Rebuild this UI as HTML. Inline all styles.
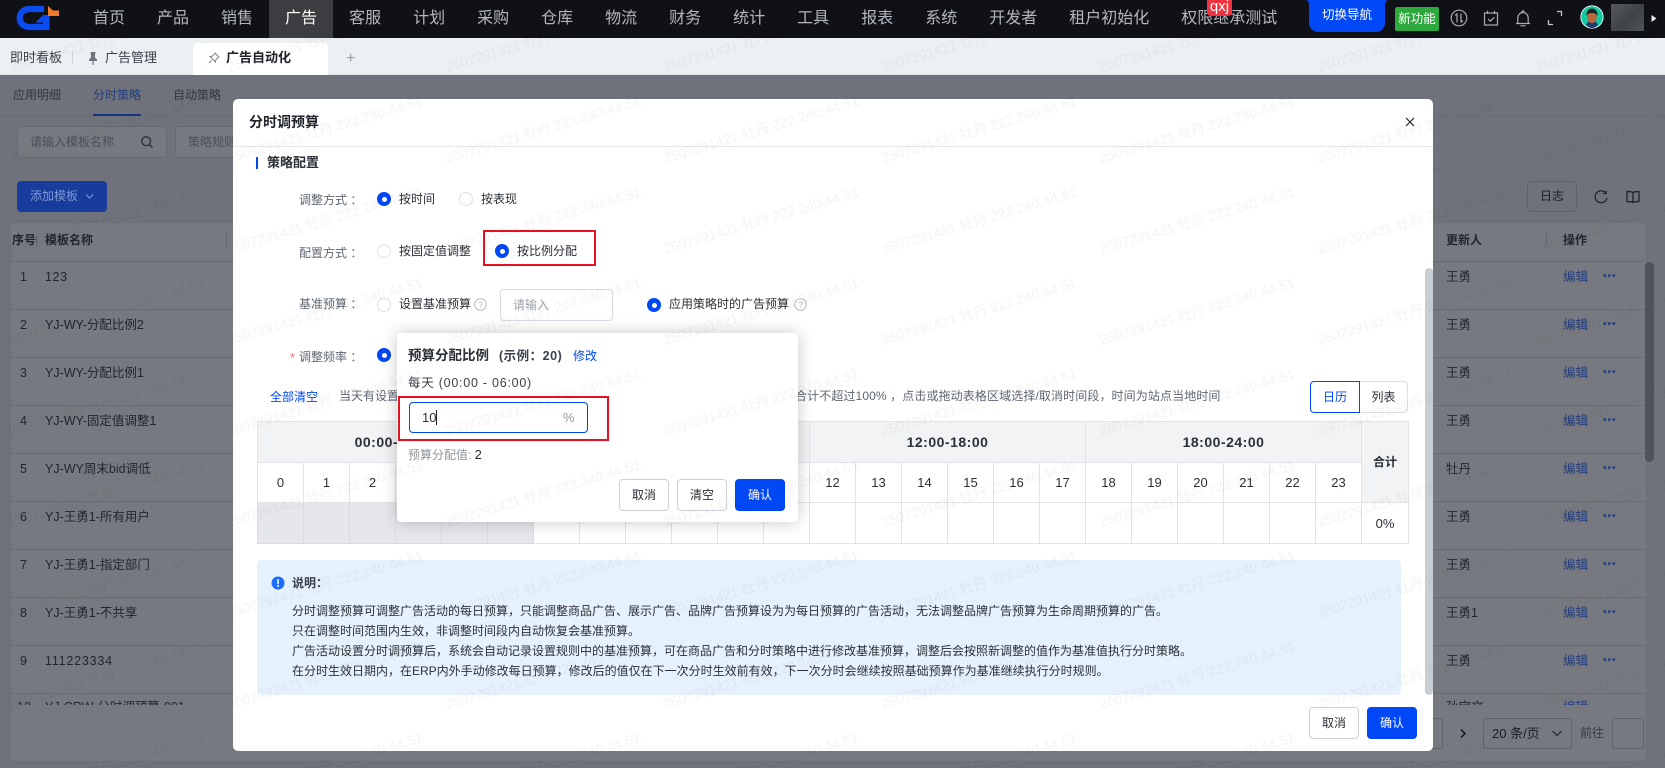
<!DOCTYPE html>
<html lang="zh">
<head>
<meta charset="utf-8">
<title>分时调预算</title>
<style>
*{box-sizing:border-box;margin:0;padding:0}
html,body{width:1665px;height:768px;overflow:hidden;background:#eceef2}
body{font-family:"Liberation Sans","Noto Sans CJK SC",sans-serif;font-size:12px;color:#2b2f36}
.a{position:absolute;white-space:nowrap}
#app{position:relative;width:1665px;height:768px;overflow:hidden}
#top{position:absolute;left:0;top:0;width:1665px;height:38px;background:#0f1116;z-index:40}
#nav{position:absolute;left:77px;top:0;height:38px;display:flex;font-size:16px;line-height:37px;color:#b4b7bd}
#nav span{padding:0 16px;display:block}
#nav .on{background:#3b3d41;color:#fff}
#tabs{position:absolute;left:0;top:38px;width:1665px;height:37px;background:#edf0f3;z-index:30;border-bottom:1px solid #e1e4e8}
#ov{position:absolute;left:0;top:75px;width:1665px;height:693px;background:rgba(14,18,30,.565);z-index:10}
#modal{position:absolute;left:233px;top:99px;width:1200px;height:652px;background:#fff;border-radius:5px;z-index:20;overflow:hidden}
#wm{position:absolute;left:0;top:0;z-index:35;pointer-events:none}
.ln{position:absolute;height:1px;background:#dfe1e6}
.rd{position:absolute;width:14px;height:14px;border-radius:50%;border:1.5px solid #dfe1e8;background:#fff}
.rd.on{border:none;background:#0047f5}
.rd.on:after{content:"";position:absolute;left:4.5px;top:4.5px;width:5px;height:5px;border-radius:50%;background:#fff}
.lb{color:#5f6672}
.btn{position:absolute;border:1px solid #cdd0d7;border-radius:4px;background:#fff;text-align:center;color:#2b2f36}
.btn.p{background:#0047f5;border-color:#0047f5;color:#fff}
#gt{position:absolute;left:24px;top:322px;width:1151px;border-collapse:collapse;table-layout:fixed;font-size:13px;text-align:center;color:#2b2f36}
#gt td{border:1px solid #e2e3e9;padding:0}
#gt .h{background:#f2f3f5;font-weight:bold;font-size:14px;letter-spacing:.5px}
#gt td.g{background:#e6e7eb;border-color:#dadbe0}
.bgt{color:#3a3f4a;font-size:12.5px}
.lk{color:#3f74ff;font-size:12.5px}
.dots{position:absolute;font-weight:bold;color:#3f74ff;font-size:10px;letter-spacing:1px}
</style>
</head>
<body>
<div id="app">

<!-- background page -->
<div class="a" style="left:13px;top:85px;line-height:20px;color:#5f6672">应用明细</div>
<div class="a" style="left:93px;top:85px;line-height:20px;color:#3f74ff">分时策略</div>
<div class="a" style="left:173px;top:85px;line-height:20px;color:#5f6672">自动策略</div>
<div class="ln" style="left:0;top:115px;width:1665px"></div>
<div class="a" style="left:93px;top:114px;width:48px;height:2px;background:#2a62ff"></div>
<div class="a" style="left:17px;top:126px;width:150px;height:32px;border:1px solid #d8dbe0;border-radius:4px;background:#fff;line-height:30px;padding-left:12px;color:#9aa0aa">请输入模板名称</div>
<svg class="a" style="left:140px;top:135px" width="14" height="14" viewBox="0 0 14 14" fill="none" stroke="#4a4f58" stroke-width="1.3"><circle cx="6.2" cy="6.2" r="4.4"/><path d="M9.5 9.5l3 3"/></svg>
<div class="a" style="left:175px;top:126px;width:120px;height:32px;border:1px solid #d8dbe0;border-radius:4px;background:#fff;line-height:30px;padding-left:12px;color:#9aa0aa">策略规则</div>
<div class="ln" style="left:0;top:168px;width:1665px"></div>
<div class="a" style="left:1527px;top:181px;width:50px;height:31px;border:1px solid #c9ccd3;border-radius:4px;text-align:center;line-height:29px;color:#2b2f36">日志</div>
<svg class="a" style="left:1593px;top:189px" width="16" height="16" viewBox="0 0 16 16" fill="none" stroke="#2b2f36" stroke-width="1.2"><path d="M13 4.2A6 6 0 1 0 14 9"/><path d="M13.2 1.6v3h-3" stroke-width="1"/></svg>
<svg class="a" style="left:1626px;top:190px" width="14" height="14" viewBox="0 0 14 14" fill="none" stroke="#2b2f36" stroke-width="1.2"><path d="M7 2.5C5.5 1.5 3 1.5 1 1.5v10c2 0 4.5 0 6 1 1.500-1 4-1 6-1v-10c-2 0-4.500 0-6 1zM7 2.500v10"/></svg>

<div class="a" style="left:10px;top:222px;width:1637px;height:540px;background:#fff;border:1px solid #e5e7eb;border-radius:4px"></div>
<div class="ln" style="left:10px;top:261px;width:1637px"></div>
<div class="ln" style="left:10px;top:309px;width:1637px"></div>
<div class="ln" style="left:10px;top:357px;width:1637px"></div>
<div class="ln" style="left:10px;top:405px;width:1637px"></div>
<div class="ln" style="left:10px;top:453px;width:1637px"></div>
<div class="ln" style="left:10px;top:501px;width:1637px"></div>
<div class="ln" style="left:10px;top:549px;width:1637px"></div>
<div class="ln" style="left:10px;top:597px;width:1637px"></div>
<div class="ln" style="left:10px;top:645px;width:1637px"></div>
<div class="ln" style="left:10px;top:693px;width:1637px"></div>
<div class="a bgt" style="left:12px;top:230px;line-height:20px;font-weight:bold;font-size:12px">序号</div>
<div class="a" style="left:36px;top:234px;width:1px;height:12px;background:#ccd0d6"></div>
<div class="a bgt" style="left:45px;top:230px;line-height:20px;font-weight:bold;font-size:12px">模板名称</div>
<div class="a" style="left:226px;top:234px;width:1px;height:12px;background:#ccd0d6"></div>
<div class="a bgt" style="left:1446px;top:230px;line-height:20px;font-weight:bold;font-size:12px">更新人</div>
<div class="a" style="left:1546px;top:234px;width:1px;height:12px;background:#ccd0d6"></div>
<div class="a bgt" style="left:1563px;top:230px;line-height:20px;font-weight:bold;font-size:12px">操作</div>

<div class="a bgt" style="left:20px;top:267px;line-height:20px">1</div><div class="a bgt" style="left:45px;top:267px;line-height:20px;letter-spacing:.6px">123</div>
<div class="a bgt" style="left:20px;top:315px;line-height:20px">2</div><div class="a bgt" style="left:45px;top:315px;line-height:20px">YJ-WY-分配比例2</div>
<div class="a bgt" style="left:20px;top:363px;line-height:20px">3</div><div class="a bgt" style="left:45px;top:363px;line-height:20px">YJ-WY-分配比例1</div>
<div class="a bgt" style="left:20px;top:411px;line-height:20px">4</div><div class="a bgt" style="left:45px;top:411px;line-height:20px">YJ-WY-固定值调整1</div>
<div class="a bgt" style="left:20px;top:459px;line-height:20px">5</div><div class="a bgt" style="left:45px;top:459px;line-height:20px">YJ-WY周末bid调低</div>
<div class="a bgt" style="left:20px;top:507px;line-height:20px">6</div><div class="a bgt" style="left:45px;top:507px;line-height:20px">YJ-王勇1-所有用户</div>
<div class="a bgt" style="left:20px;top:555px;line-height:20px">7</div><div class="a bgt" style="left:45px;top:555px;line-height:20px">YJ-王勇1-指定部门</div>
<div class="a bgt" style="left:20px;top:603px;line-height:20px">8</div><div class="a bgt" style="left:45px;top:603px;line-height:20px">YJ-王勇1-不共享</div>
<div class="a bgt" style="left:20px;top:651px;line-height:20px">9</div><div class="a bgt" style="left:45px;top:651px;line-height:20px;letter-spacing:.8px">111223334</div>

<div class="a bgt" style="left:1446px;top:267px;line-height:20px">王勇</div>
<div class="a bgt" style="left:1446px;top:315px;line-height:20px">王勇</div>
<div class="a bgt" style="left:1446px;top:363px;line-height:20px">王勇</div>
<div class="a bgt" style="left:1446px;top:411px;line-height:20px">王勇</div>
<div class="a bgt" style="left:1446px;top:459px;line-height:20px">牡丹</div>
<div class="a bgt" style="left:1446px;top:507px;line-height:20px">王勇</div>
<div class="a bgt" style="left:1446px;top:555px;line-height:20px">王勇</div>
<div class="a bgt" style="left:1446px;top:603px;line-height:20px">王勇1</div>
<div class="a bgt" style="left:1446px;top:651px;line-height:20px">王勇</div>

<div class="a lk" style="left:1563px;top:267px;line-height:20px">编辑</div><div class="dots" style="left:1603px;top:271px">•••</div>
<div class="a lk" style="left:1563px;top:315px;line-height:20px">编辑</div><div class="dots" style="left:1603px;top:319px">•••</div>
<div class="a lk" style="left:1563px;top:363px;line-height:20px">编辑</div><div class="dots" style="left:1603px;top:367px">•••</div>
<div class="a lk" style="left:1563px;top:411px;line-height:20px">编辑</div><div class="dots" style="left:1603px;top:415px">•••</div>
<div class="a lk" style="left:1563px;top:459px;line-height:20px">编辑</div><div class="dots" style="left:1603px;top:463px">•••</div>
<div class="a lk" style="left:1563px;top:507px;line-height:20px">编辑</div><div class="dots" style="left:1603px;top:511px">•••</div>
<div class="a lk" style="left:1563px;top:555px;line-height:20px">编辑</div><div class="dots" style="left:1603px;top:559px">•••</div>
<div class="a lk" style="left:1563px;top:603px;line-height:20px">编辑</div><div class="dots" style="left:1603px;top:607px">•••</div>
<div class="a lk" style="left:1563px;top:651px;line-height:20px">编辑</div><div class="dots" style="left:1603px;top:655px">•••</div>

<div class="a" style="left:10px;top:693px;width:1637px;height:12px;overflow:hidden">
  <div class="a bgt" style="left:7px;top:4px;line-height:20px">10</div>
  <div class="a bgt" style="left:35px;top:4px;line-height:20px">YJ-CRW-分时调预算-001</div>
  <div class="a bgt" style="left:1436px;top:4px;line-height:20px">孙宝文</div>
  <div class="a lk" style="left:1553px;top:4px;line-height:20px">编辑</div>
</div>
<div class="a" style="left:1645px;top:262px;width:9px;height:200px;border-radius:5px;background:#a6a9b2"></div>

<div class="a" style="left:1410px;top:718px;width:33px;height:31px;border:1px solid #c9ccd3;border-radius:3px"></div>
<svg class="a" style="left:1459px;top:728px" width="8" height="11" viewBox="0 0 8 11" fill="none" stroke="#2b2f36" stroke-width="1.6"><path d="M2 1.500l4 4-4 4"/></svg>
<div class="a" style="left:1483px;top:718px;width:89px;height:31px;border:1px solid #c9ccd3;border-radius:3px;line-height:29px;padding-left:8px;font-size:13px;color:#2b2f36">20 条/页</div>
<svg class="a" style="left:1551px;top:729px" width="12" height="9" viewBox="0 0 12 9" fill="none" stroke="#2b2f36" stroke-width="1.1"><path d="M1.500 2l4.500 4.500L10.500 2"/></svg>
<div class="a" style="left:1580px;top:723px;line-height:20px;color:#6a6f78">前往</div>
<div class="a" style="left:1612px;top:718px;width:32px;height:31px;border:1px solid #c9ccd3;border-radius:3px"></div>

<div id="ov"></div>
<div class="a" style="left:17px;top:181px;width:90px;height:31px;background:#173c9b;border-radius:4px;z-index:11;color:#7f97d6;line-height:31px;padding-left:13px">添加模板
  <svg style="position:absolute;left:68px;top:12px" width="9" height="7" viewBox="0 0 9 7" fill="none" stroke="#7f97d6" stroke-width="1.100"><path d="M1 1.500l3.500 3.500L8 1.500"/></svg>
</div>

<!-- modal -->
<div id="modal">
  <div class="a" style="left:16px;top:13px;font-size:14px;font-weight:bold;line-height:20px;color:#1f2329">分时调预算</div>
  <svg class="a" style="left:1171px;top:17px" width="12" height="12" viewBox="0 0 12 12" fill="none" stroke="#1f2329" stroke-width="1.200"><path d="M2 2l8 8M10 2l-8 8"/></svg>
  <div class="a" style="left:0;top:47px;width:1200px;height:1px;background:#e6e6ef"></div>

  <div class="a" style="left:23px;top:58px;width:2px;height:12px;background:#0047f5"></div>
  <div class="a" style="left:34px;top:54px;font-size:13px;font-weight:bold;line-height:20px;color:#2b2f36">策略配置</div>

  <div class="a lb" style="left:66px;top:91px;line-height:20px">调整方式 ：</div>
  <div class="rd on" style="left:144px;top:93px"></div><div class="a" style="left:166px;top:90px;line-height:20px">按时间</div>
  <div class="rd" style="left:226px;top:93px"></div><div class="a" style="left:248px;top:90px;line-height:20px">按表现</div>

  <div class="a lb" style="left:66px;top:144px;line-height:20px">配置方式 ：</div>
  <div class="rd" style="left:144px;top:145px"></div><div class="a" style="left:166px;top:142px;line-height:20px">按固定值调整</div>
  <div class="rd on" style="left:262px;top:145px"></div><div class="a" style="left:284px;top:142px;line-height:20px">按比例分配</div>
  <div class="a" style="left:250px;top:131px;width:113px;height:36px;border:2px solid #e8101f"></div>

  <div class="a lb" style="left:66px;top:195px;line-height:20px">基准预算 ：</div>
  <div class="rd" style="left:144px;top:199px"></div><div class="a" style="left:166px;top:195px;line-height:20px">设置基准预算</div>
  <svg class="a" style="left:241px;top:199px" width="13" height="13" viewBox="0 0 13 13" fill="none" stroke="#b5b9c2"><circle cx="6.500" cy="6.500" r="5.800"/><text x="6.500" y="9.800" font-size="9" fill="#b5b9c2" stroke="none" text-anchor="middle" font-family="Liberation Sans">?</text></svg>
  <div class="a" style="left:267px;top:190px;width:113px;height:32px;border:1px solid #d9dbe2;border-radius:4px;line-height:30px;padding-left:12px;color:#9aa0aa">请输入</div>
  <div class="rd on" style="left:414px;top:199px"></div><div class="a" style="left:436px;top:195px;line-height:20px">应用策略时的广告预算</div>
  <svg class="a" style="left:561px;top:199px" width="13" height="13" viewBox="0 0 13 13" fill="none" stroke="#b5b9c2"><circle cx="6.500" cy="6.500" r="5.800"/><text x="6.500" y="9.800" font-size="9" fill="#b5b9c2" stroke="none" text-anchor="middle" font-family="Liberation Sans">?</text></svg>

  <div class="a" style="left:57px;top:249px;line-height:20px;color:#f56c6c;font-size:13px">*</div>
  <div class="a lb" style="left:66px;top:248px;line-height:20px">调整频率 ：</div>
  <div class="rd on" style="left:144px;top:249px"></div>

  <div class="a" style="left:37px;top:288px;line-height:20px;color:#0047f5">全部清空</div>
  <div class="a lb" style="left:106px;top:287px;line-height:20px">当天有设置预算分配比例的时段，预算分配比例</div>
  <div class="a lb" style="left:562px;top:287px;line-height:20px;letter-spacing:.11px">合计不超过100% ，点击或拖动表格区域选择/取消时间段，时间为站点当地时间</div>
  <div class="a" style="left:1077px;top:282px;width:50px;height:32px;border:1px solid #0047f5;border-radius:4px 0 0 4px;line-height:30px;text-align:center;color:#0047f5;background:#fff">日历</div>
  <div class="a" style="left:1127px;top:282px;width:48px;height:32px;border:1px solid #dcdee4;border-left:none;border-radius:0 4px 4px 0;line-height:30px;text-align:center;color:#2b2f36">列表</div>

  <table id="gt">
    <colgroup><col style="width:46px"><col style="width:46px"><col style="width:46px"><col style="width:46px"><col style="width:46px"><col style="width:46px"><col style="width:46px"><col style="width:46px"><col style="width:46px"><col style="width:46px"><col style="width:46px"><col style="width:46px"><col style="width:46px"><col style="width:46px"><col style="width:46px"><col style="width:46px"><col style="width:46px"><col style="width:46px"><col style="width:46px"><col style="width:46px"><col style="width:46px"><col style="width:46px"><col style="width:46px"><col style="width:46px"><col style="width:47px"></colgroup>
    <tr style="height:41px"><td class="h" colspan="6">00:00-06:00</td><td class="h" colspan="6">06:00-12:00</td><td class="h" colspan="6">12:00-18:00</td><td class="h" colspan="6">18:00-24:00</td><td class="h" rowspan="2" style="font-size:12px;letter-spacing:0;padding-bottom:2px">合计</td></tr>
    <tr style="height:40px"><td>0</td><td>1</td><td>2</td><td>3</td><td>4</td><td>5</td><td>6</td><td>7</td><td>8</td><td>9</td><td>10</td><td>11</td><td>12</td><td>13</td><td>14</td><td>15</td><td>16</td><td>17</td><td>18</td><td>19</td><td>20</td><td>21</td><td>22</td><td>23</td></tr>
    <tr style="height:41px"><td class="g"></td><td class="g"></td><td class="g"></td><td class="g"></td><td class="g"></td><td class="g"></td><td></td><td></td><td></td><td></td><td></td><td></td><td></td><td></td><td></td><td></td><td></td><td></td><td></td><td></td><td></td><td></td><td></td><td></td><td>0%</td></tr>
  </table>

  <div class="a" style="left:24px;top:461px;width:1144px;height:135px;background:#e6f1fe;border-radius:4px"></div>
  <svg class="a" style="left:38px;top:477px" width="14" height="14" viewBox="0 0 14 14"><circle cx="7" cy="7" r="6.500" fill="#1a6dff"/><rect x="6.200" y="3" width="1.600" height="5.200" rx=".7" fill="#fff"/><circle cx="7" cy="10" r="1" fill="#fff"/></svg>
  <div class="a" style="left:59px;top:474px;line-height:20px;font-weight:bold;color:#3a3f4a">说明：</div>
  <div class="a" style="left:59px;top:502px;line-height:20px;color:#2b2f36">分时调整预算可调整广告活动的每日预算，只能调整商品广告、展示广告、品牌广告预算设为为每日预算的广告活动，无法调整品牌广告预算为生命周期预算的广告。</div>
  <div class="a" style="left:59px;top:522px;line-height:20px;color:#2b2f36">只在调整时间范围内生效，非调整时间段内自动恢复会基准预算。</div>
  <div class="a" style="left:59px;top:542px;line-height:20px;color:#2b2f36">广告活动设置分时调预算后，系统会自动记录设置规则中的基准预算，可在商品广告和分时策略中进行修改基准预算，调整后会按照新调整的值作为基准值执行分时策略。</div>
  <div class="a" style="left:59px;top:562px;line-height:20px;color:#2b2f36">在分时生效日期内，在ERP内外手动修改每日预算，修改后的值仅在下一次分时生效前有效，下一次分时会继续按照基础预算作为基准继续执行分时规则。</div>

  <div class="a" style="left:1192px;top:169px;width:8px;height:427px;background:#c9cdd4;border-radius:4px"></div>

  <div class="btn" style="left:1076px;top:608px;width:50px;height:32px;line-height:30px">取消</div>
  <div class="btn p" style="left:1134px;top:608px;width:50px;height:32px;line-height:30px">确认</div>

  <!-- popover -->
  <div class="a" style="left:164px;top:234px;width:401px;height:189px;background:#fff;border-radius:4px;box-shadow:0 0 16px rgba(0,0,0,.22)">
    <div class="a" style="left:11px;top:13px;font-size:13.500px;font-weight:bold;line-height:20px;color:#2b2f36">预算分配比例</div>
    <div class="a" style="left:102px;top:13px;font-size:12.500px;font-weight:bold;line-height:20px;color:#3a3f4a;letter-spacing:.5px">(示例：20)</div>
    <div class="a" style="left:176px;top:13px;line-height:20px;color:#0047f5">修改</div>
    <div class="a" style="left:11px;top:40px;font-size:12.500px;line-height:20px;color:#3a3f4a;letter-spacing:.75px">每天 (00:00 - 06:00)</div>
    <div class="a" style="left:12px;top:69px;width:179px;height:31px;border:1px solid #0047f5;border-radius:4px"></div>
    <div class="a" style="left:25px;top:75px;font-size:13px;line-height:20px;color:#2b2f36">10</div>
    <div class="a" style="left:39px;top:77px;width:1px;height:15px;background:#1f2329"></div>
    <div class="a" style="left:166px;top:75px;font-size:13px;line-height:20px;color:#8f949c">%</div>
    <div class="a" style="left:1px;top:63px;width:211px;height:45px;border:2px solid #e8101f"></div>
    <div class="a" style="left:11px;top:112px;line-height:20px;color:#8f949c">预算分配值: <span style="color:#2b2f36;font-size:13px">2</span></div>
    <div class="btn" style="left:222px;top:146px;width:50px;height:32px;line-height:30px">取消</div>
    <div class="btn" style="left:280px;top:146px;width:50px;height:32px;line-height:30px">清空</div>
    <div class="btn p" style="left:338px;top:146px;width:50px;height:32px;line-height:30px">确认</div>
  </div>
</div>

<!-- tabs -->
<div id="tabs">
  <div class="a" style="left:10px;top:10px;font-size:13px;line-height:20px;color:#3a3f4a">即时看板</div>
  <div class="a" style="left:72px;top:14px;width:1px;height:13px;background:#d3d6db"></div>
  <svg class="a" style="left:88px;top:14px" width="10" height="13" viewBox="0 0 10 13" fill="#6f747c"><path d="M2.500 0h5v1.200L7 2v3.500l2 2V9H5.600v4h-1.200V9H1V7.500l2-2V2l-.5-.8z"/></svg>
  <div class="a" style="left:105px;top:10px;font-size:13px;line-height:20px;color:#3a3f4a">广告管理</div>
  <div class="a" style="left:193px;top:5px;width:135px;height:32px;background:#fff;border-radius:4px 4px 0 0"></div>
  <svg class="a" style="left:208px;top:14px" width="12" height="12" viewBox="0 0 12 12" fill="none" stroke="#7b8088" stroke-width="1"><path d="M7 1l4 4-1 .6-2.200 2.200L7.500 10 2 4.500 4.200 4.200 6.400 2z"/><path d="M3.500 8.500L1 11"/></svg>
  <div class="a" style="left:226px;top:10px;font-size:13px;font-weight:bold;line-height:20px;color:#1f2329">广告自动化</div>
  <div class="a" style="left:346px;top:11px;font-size:16px;line-height:20px;color:#9a9ea6">+</div>
</div>

<!-- watermark -->
<svg id="wm" width="1665" height="768" xmlns="http://www.w3.org/2000/svg">
  <defs>
    <pattern id="wp" patternUnits="userSpaceOnUse" x="0" y="0" width="218" height="91">
      <text transform="translate(11 72) rotate(-16.600)" font-size="14" fill="rgba(0,0,0,.042)" font-family="Liberation Sans, Noto Sans CJK SC, sans-serif">2507291421 牡丹 222.240.44.51</text>
    </pattern>
  </defs>
  <rect x="0" y="0" width="1665" height="768" fill="url(#wp)"/>
</svg>

<!-- top bar -->
<div id="top">
  <svg class="a" style="left:10px;top:0" width="60" height="38" viewBox="10 0 60 38">
    <path d="M44 9H30C23.500 9 19.700 13 19.700 18S23.500 27 30 27H45" fill="none" stroke="#0a4cf0" stroke-width="6.200"/>
    <path d="M43 15h6.500v15h-6.500v-7.500H35.500z" fill="#0a4cf0"/>
    <path d="M48 6l5 4.500h6V16H48z" fill="#ef7a2c"/>
  </svg>
  <div id="nav"><span>首页</span><span>产品</span><span>销售</span><span class="on">广告</span><span>客服</span><span>计划</span><span>采购</span><span>仓库</span><span>物流</span><span>财务</span><span>统计</span><span>工具</span><span>报表</span><span>系统</span><span>开发者</span><span>租户初始化</span><span>权限继承测试</span></div>
  <div class="a" style="left:1207px;top:0;width:25px;height:16px;background:#f0343f;border-radius:0 0 4px 4px;color:#fff;font-size:15px;line-height:13px;text-align:center">qxj</div>
  <svg class="a" style="left:1305px;top:0" width="84" height="32" viewBox="0 0 84 32"><path d="M0 0h84c-3 0-4 2-4 5v18c0 5-4 9-9 9H13c-5 0-9-4-9-9V5c0-3-1-5-4-5z" fill="#0047f5"/></svg>
  <div class="a" style="left:1309px;top:5px;width:76px;text-align:center;color:#fff;font-size:12.500px;line-height:20px">切换导航</div>
  <div class="a" style="left:1395px;top:7px;width:44px;height:24px;background:#2ca83c;border-radius:2px;color:#fff;font-size:12.500px;line-height:24px;text-align:center">新功能</div>
  <svg class="a" style="left:1450px;top:9px" width="18" height="18" viewBox="0 0 18 18" fill="none" stroke="#a9acb2" stroke-width="1.200"><circle cx="9" cy="9" r="7.800"/><path d="M7 4.500v9M7 4.500L5.200 6.500M11 13.500v-9M11 13.500l1.800-2"/></svg>
  <svg class="a" style="left:1483px;top:10px" width="16" height="16" viewBox="0 0 16 16" fill="none" stroke="#a9acb2" stroke-width="1.200"><rect x="1.500" y="3" width="13" height="12"/><path d="M4.500 .8V4M11.500 .8V4M5 9l2.200 2.200L11.200 7.500"/></svg>
  <svg class="a" style="left:1514px;top:9px" width="18" height="18" viewBox="0 0 18 18" fill="none" stroke="#a9acb2" stroke-width="1.200"><path d="M2 14.500h14M3.800 14.500V9c0-3 2.200-5.500 5.200-5.500S14.200 6 14.200 9v5.500M7.800 3.500C7.800 2.500 8.300 1.800 9 1.800s1.200 .7 1.200 1.700M6.500 16.800h5"/></svg>
  <svg class="a" style="left:1547px;top:10px" width="16" height="16" viewBox="0 0 16 16" fill="none" stroke="#c4c6cb" stroke-width="1.300"><path d="M10 1.500h4.500V6M1.500 10v4.500H6"/></svg>
  <svg class="a" style="left:1580px;top:5px" width="24" height="24" viewBox="0 0 24 24"><circle cx="12" cy="12" r="11.600" fill="#fff"/><circle cx="12" cy="12" r="10.800" fill="#12c9a4"/><path d="M6 20c1-3 3-4 6-4s5 1 6 4c-2 2-4 3-6 3s-4-1-6-3z" fill="#1e3a6e"/><ellipse cx="12" cy="12" rx="4.800" ry="6" fill="#b8683a"/><path d="M6.500 11c-.5-4 2-7.500 5.500-7.500s6 3.500 5.500 7.500c-1-2-2.500-3-5.500-3S7.500 9 6.500 11z" fill="#16201f"/></svg>
  <div class="a" style="left:1611px;top:4px;width:33px;height:27px;background:linear-gradient(135deg,#565a5e,#3f4346 55%,#4f5355)"></div>
  <svg class="a" style="left:1651px;top:15px" width="6" height="7" viewBox="0 0 6 7"><path d="M.5 0L5.500 3.500.5 7z" fill="#e8e9eb"/></svg>
</div>

</div>
</body>
</html>
